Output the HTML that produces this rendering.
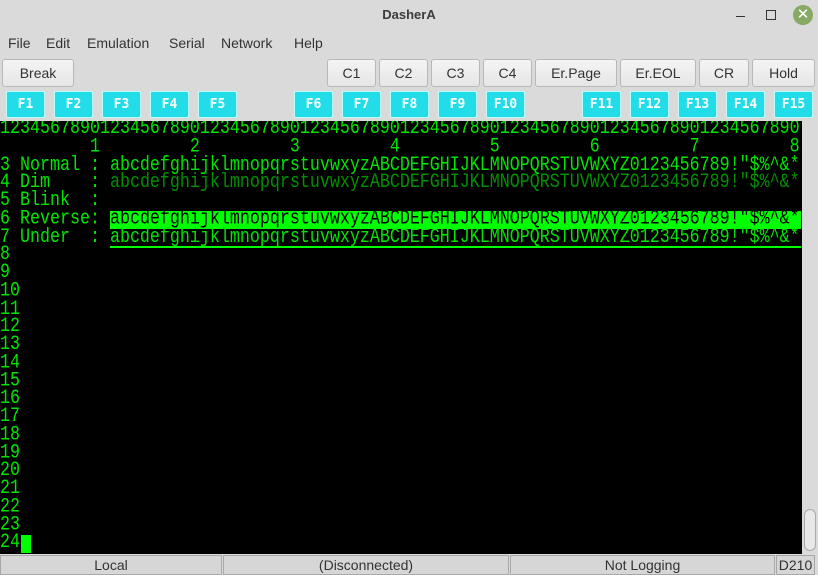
<!DOCTYPE html>
<html><head><meta charset="utf-8"><style>
*{margin:0;padding:0;box-sizing:border-box}
body{width:818px;height:575px;background:#dadada;font-family:"Liberation Sans","DejaVu Sans",sans-serif;position:relative;overflow:hidden;color:#333}
.abs{position:absolute}
.title{left:0;top:0;width:818px;height:31px;background:#dadada;border-radius:6px 6px 0 0;text-align:center;font-weight:bold;font-size:13px;line-height:30px;color:#3c3c3c}
.menu span{position:absolute;top:35px;font-size:14px;color:#333}
.btn{position:absolute;top:59px;height:28px;background:linear-gradient(#f4f4f4,#e6e6e6);border:1px solid #b8b8b8;border-radius:3px;font-size:14px;text-align:center;line-height:26px;color:#333}
.fk{position:absolute;top:91px;width:39px;height:27px;background:#22dde8;border:1px solid #bff;border-radius:2px;color:#fff;font-family:"DejaVu Sans Mono","Liberation Mono",monospace;font-weight:bold;font-size:13px;text-align:center;line-height:25px}
.term{left:0;top:121px;width:802px;height:433px;background:#000;overflow:hidden}
.txt{position:absolute;left:0;top:0;width:802px;transform:scaleY(1.22);transform-origin:0 0;font-family:"Liberation Mono",monospace;font-size:16.67px;line-height:14.754px;color:#00e600;white-space:pre}
.txt div{height:14.754px}
.dim{color:#009000}
.rev{color:#000}
.sb{left:802px;top:121px;width:16px;height:433px;background:#dadada}
.st{position:absolute;top:555px;height:20px;border:1px solid #a8a8a8;background:#d6d6d6;font-size:14px;text-align:center;line-height:18px;color:#333}
</style></head><body>
<div class="abs title">DasherA</div>
<div class="abs" style="left:736px;top:16px;width:9px;height:1px;background:#333"></div>
<div class="abs" style="left:766px;top:10px;width:10px;height:10px;border:1px solid #333"></div>
<div class="abs" style="left:793px;top:5px;width:20px;height:20px;border-radius:50%;background:#86a963;color:#fff;text-align:center;line-height:20px;font-size:15px">✕</div>
<div class="menu"><span style="left:8px">File</span><span style="left:46px">Edit</span><span style="left:87px">Emulation</span><span style="left:169px">Serial</span><span style="left:221px">Network</span><span style="left:294px">Help</span></div>
<div class="btn" style="left:2px;width:72px">Break</div>
<div class="btn" style="left:327px;width:49px">C1</div>
<div class="btn" style="left:379px;width:49px">C2</div>
<div class="btn" style="left:431px;width:49px">C3</div>
<div class="btn" style="left:483px;width:49px">C4</div>
<div class="btn" style="left:535px;width:82px">Er.Page</div>
<div class="btn" style="left:620px;width:76px">Er.EOL</div>
<div class="btn" style="left:699px;width:50px">CR</div>
<div class="btn" style="left:752px;width:63px">Hold</div>
<div class="fk" style="left:6px">F1</div><div class="fk" style="left:54px">F2</div><div class="fk" style="left:102px">F3</div><div class="fk" style="left:150px">F4</div><div class="fk" style="left:198px">F5</div>
<div class="fk" style="left:294px">F6</div><div class="fk" style="left:342px">F7</div><div class="fk" style="left:390px">F8</div><div class="fk" style="left:438px">F9</div><div class="fk" style="left:486px">F10</div>
<div class="fk" style="left:582px">F11</div><div class="fk" style="left:630px">F12</div><div class="fk" style="left:678px">F13</div><div class="fk" style="left:726px">F14</div><div class="fk" style="left:774px">F15</div>
<div class="abs term">
<div class="abs" style="left:110px;top:90px;width:691px;height:18px;background:#00ff00"></div>
<div class="abs" style="left:110px;top:125px;width:691px;height:2px;background:#00ff00"></div>
<div class="abs" style="left:21px;top:414px;width:10px;height:18px;background:#00ff00"></div>
<div class="txt"><div>12345678901234567890123456789012345678901234567890123456789012345678901234567890</div><div>         1         2         3         4         5         6         7         8</div><div>3 Normal : abcdefghijklmnopqrstuvwxyzABCDEFGHIJKLMNOPQRSTUVWXYZ0123456789!"$%^&amp;*</div><div>4 Dim    : <span class="dim">abcdefghijklmnopqrstuvwxyzABCDEFGHIJKLMNOPQRSTUVWXYZ0123456789!"$%^&amp;*</span></div><div>5 Blink  :</div><div>6 Reverse: <span class="rev">abcdefghijklmnopqrstuvwxyzABCDEFGHIJKLMNOPQRSTUVWXYZ0123456789!"$%^&amp;*</span></div><div>7 Under  : abcdefghijklmnopqrstuvwxyzABCDEFGHIJKLMNOPQRSTUVWXYZ0123456789!"$%^&amp;*</div><div>8</div><div>9</div><div>10</div><div>11</div><div>12</div><div>13</div><div>14</div><div>15</div><div>16</div><div>17</div><div>18</div><div>19</div><div>20</div><div>21</div><div>22</div><div>23</div><div>24</div></div>
</div>
<div class="abs sb"><div class="abs" style="left:2px;top:388px;width:12px;height:42px;border:1px solid #aaa;border-radius:6px;background:#e8e8e8"></div></div>
<div class="st" style="left:0;width:222px">Local</div>
<div class="st" style="left:223px;width:286px">(Disconnected)</div>
<div class="st" style="left:510px;width:265px">Not Logging</div>
<div class="st" style="left:776px;width:39px">D210</div>
</body></html>
